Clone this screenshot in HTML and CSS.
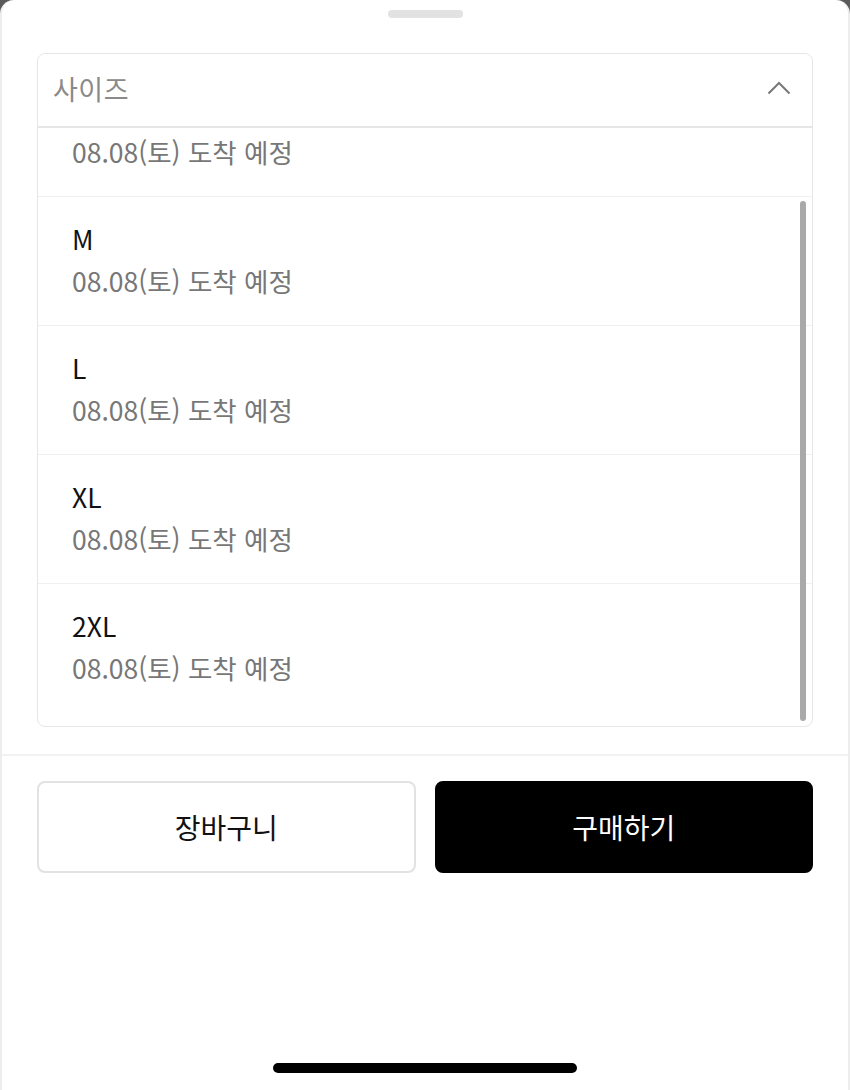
FILE: index.html
```html
<!DOCTYPE html>
<html lang="ko">
<head>
<meta charset="utf-8">
<title>사이즈 선택</title>
<link rel="stylesheet" href="styles.css">
</head>
<body>
<div class="sheet">
  <div class="handle"></div>
  <div class="select">
    <div class="select-head">
      <span class="placeholder">사이즈</span>
      <svg class="chevron" width="24" height="14" viewBox="0 0 24 14"><path d="M1.5 12.5 L12 2 L22.5 12.5" fill="none" stroke="#777" stroke-width="2"/></svg>
    </div>
    <div class="list">
      <div class="list-inner">
        <div class="item"><div class="size">S</div><div class="eta">08.08(토) 도착 예정</div></div>
        <div class="item"><div class="size">M</div><div class="eta">08.08(토) 도착 예정</div></div>
        <div class="item"><div class="size">L</div><div class="eta">08.08(토) 도착 예정</div></div>
        <div class="item"><div class="size">XL</div><div class="eta">08.08(토) 도착 예정</div></div>
        <div class="item"><div class="size">2XL</div><div class="eta">08.08(토) 도착 예정</div></div>
      </div>
      <div class="scrollbar"></div>
    </div>
  </div>
  <div class="footer">
    <button class="btn btn-cart">장바구니</button>
    <button class="btn btn-buy">구매하기</button>
  </div>
  <div class="spacer"></div>
  <div class="home"></div>
</div>
</body>
</html>
```
FILE: styles.css
```css
html, body {
  margin: 0;
  padding: 0;
}
body {
  background: #5a5a5a;
  font-family: "Noto Sans CJK KR", "Noto Sans", sans-serif;
}
.sheet {
  box-sizing: border-box;
  width: 850px;
  height: 1090px;
  background: #fff;
  border-left: 2px solid #ededed;
  border-right: 2px solid #ededed;
  border-radius: 14px 14px 0 0;
  display: flex;
  flex-direction: column;
  overflow: hidden;
}
.handle {
  width: 75px;
  height: 8px;
  border-radius: 4px;
  background: #e2e2e2;
  margin: 10px auto 0;
}
.select {
  margin: 35px 35px 0;
  border: 1.5px solid #e6e6e6;
  border-radius: 8px;
  display: flex;
  flex-direction: column;
}
.select-head {
  height: 72px;
  border-bottom: 2px solid #e6e6e6;
  display: flex;
  align-items: center;
  justify-content: space-between;
  padding: 0 21px 0 15px;
}
.placeholder {
  font-size: 27px;
  color: #8a8a8a;
  letter-spacing: 0.5px;
  margin-top: -3px;
}
.chevron {
  display: block;
  margin-top: -4px;
}
.list {
  position: relative;
  height: 598px;
  overflow: hidden;
}
.list-inner {
  margin-top: -60px;
}
.item {
  padding: 25px 34px 27px;
  border-bottom: 1px solid #f0f0f0;
  display: flex;
  flex-direction: column;
  gap: 8px;
}
.item:last-child {
  border-bottom: none;
}
.size {
  font-size: 26.5px;
  line-height: 34px;
  color: #111;
}
.eta {
  font-size: 26.5px;
  line-height: 34px;
  color: #777;
}
.scrollbar {
  position: absolute;
  right: 6px;
  top: 73px;
  width: 6px;
  height: 520px;
  border-radius: 3px;
  background: #a9a9a9;
}
.footer {
  margin-top: 27px;
  border-top: 2px solid #f2f2f2;
  padding: 25px 35px 0;
  display: flex;
  gap: 19px;
}
.btn {
  flex: 1;
  height: 92px;
  border-radius: 8px;
  font-family: "Noto Sans CJK KR", "Noto Sans", sans-serif;
  font-size: 28px;
  cursor: pointer;
}
.btn-cart {
  background: #fff;
  border: 2px solid #e2e2e2;
  color: #111;
}
.btn-buy {
  background: #000;
  border: 2px solid #000;
  color: #fff;
}
.spacer {
  flex: 1;
}
.home {
  width: 304px;
  height: 10px;
  border-radius: 5px;
  background: #000;
  margin: 0 auto 17px;
}
```
